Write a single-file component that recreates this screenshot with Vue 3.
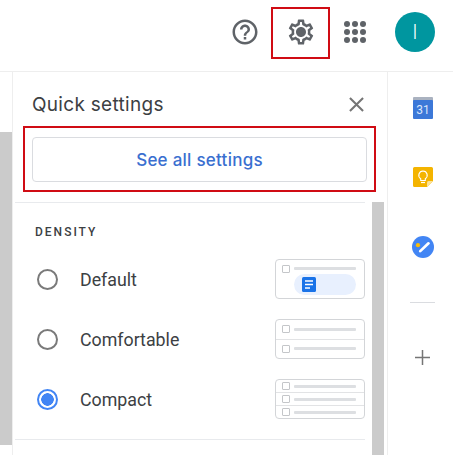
<template>
  <div class="page">
    <header class="topbar">
      <button class="icon-btn help">
        <svg viewBox="0 0 24 24" width="30" height="30"><path fill="#5f6368" d="M11 18h2v-2h-2v2zm1-16C6.48 2 2 6.48 2 12s4.48 10 10 10 10-4.48 10-10S17.52 2 12 2zm0 18c-4.41 0-8-3.59-8-8s3.59-8 8-8 8 3.59 8 8-3.59 8-8 8zm0-14c-2.21 0-4 1.79-4 4h2c0-1.1.9-2 2-2s2 .9 2 2c0 2-3 1.75-3 5h2c0-2.25 3-2.5 3-5 0-2.21-1.79-4-4-4z" /></svg>
      </button>
      <button class="icon-btn gear">
        <svg viewBox="0 0 24 24" width="30" height="30"><path fill="#5f6368" d="M19.43 12.98c.04-.32.07-.64.07-.98 0-.34-.03-.66-.07-.98l2.11-1.65c.19-.15.24-.42.12-.64l-2-3.46c-.09-.16-.26-.25-.44-.25-.06 0-.12.01-.17.03l-2.49 1c-.52-.4-1.08-.73-1.69-.98l-.38-2.65C14.46 2.18 14.25 2 14 2h-4c-.25 0-.46.18-.49.42l-.38 2.65c-.61.25-1.17.59-1.69.98l-2.49-1c-.06-.02-.12-.03-.18-.03-.17 0-.34.09-.43.25l-2 3.46c-.13.22-.07.49.12.64l2.11 1.65c-.04.32-.07.65-.07.98 0 .33.03.66.07.98l-2.11 1.65c-.19.15-.24.42-.12.64l2 3.46c.09.16.26.25.44.25.06 0 .12-.01.17-.03l2.49-1c.52.4 1.08.73 1.69.98l.38 2.65c.03.24.24.42.49.42h4c.25 0 .46-.18.49-.42l.38-2.65c.61-.25 1.17-.59 1.69-.98l2.49 1c.06.02.12.03.18.03.17 0 .34-.09.43-.25l2-3.46c.12-.22.07-.49-.12-.64l-2.11-1.65zm-1.98-1.71c.04.31.05.52.05.73 0 .21-.02.43-.05.73l-.14 1.13.89.7 1.08.84-.7 1.21-1.27-.51-1.04-.42-.9.68c-.43.32-.84.56-1.25.73l-1.06.43-.16 1.13-.2 1.35h-1.4l-.19-1.35-.16-1.13-1.06-.43c-.43-.18-.83-.41-1.23-.71l-.91-.7-1.06.43-1.27.51-.7-1.21 1.08-.84.89-.7-.14-1.13c-.03-.31-.05-.54-.05-.74s.02-.43.05-.73l.14-1.13-.89-.7-1.08-.84.7-1.21 1.27.51 1.04.42.9-.68c.43-.32.84-.56 1.25-.73l1.06-.43.16-1.13.2-1.35h1.39l.19 1.35.16 1.13 1.06.43c.43.18.83.41 1.23.71l.91.7 1.06-.43 1.27-.51.7 1.21-1.07.85-.89.7.14 1.13zM12 8c-2.21 0-4 1.79-4 4s1.79 4 4 4 4-1.79 4-4-1.79-4-4-4z" /></svg>
      </button>
      <div class="apps">
        <span v-for="n in 9" :key="n" class="dot"></span>
      </div>
      <div class="avatar">I</div>
    </header>

    <div class="content">
      <div class="left-strip">
        <div class="left-grey"></div>
      </div>

      <section class="panel">
        <div class="panel-head">
          <h2>Quick settings</h2>
          <svg class="close" viewBox="0 0 16 16" width="15" height="15"><path d="M1 1l14 14M15 1L1 15" stroke="#757575" stroke-width="2.2" fill="none" /></svg>
        </div>
        <div class="see-all-wrap">
          <button class="see-all">See all settings</button>
        </div>
        <div class="panel-body">
          <div class="panel-scroll">
            <div class="density">
              <h3>DENSITY</h3>
              <div v-for="opt in densities" :key="opt.name" class="option">
                <span class="radio" :class="{ checked: opt.checked }"></span>
                <span class="opt-label">{{ opt.name }}</span>
                <div class="thumb">
                  <template v-if="opt.rows === 1">
                    <div class="thumb-row first">
                      <i class="box"></i><i class="line"></i>
                    </div>
                    <div class="chip">
                      <svg viewBox="0 0 14 15" width="14" height="15"><rect width="14" height="15" rx="1.5" fill="#1a73e8" /><path d="M3 4h8M3 7.500h8M3 11h5" stroke="#fff" stroke-width="1.400" /></svg>
                    </div>
                  </template>
                  <template v-else>
                    <div v-for="r in opt.rows" :key="r" class="thumb-row split">
                      <i class="box"></i><i class="line"></i>
                    </div>
                  </template>
                </div>
              </div>
            </div>
          </div>
          <div class="scrollbar"></div>
        </div>
      </section>

      <aside class="side">
        <svg class="side-icon" viewBox="0 0 20 22" width="20" height="22">
          <path d="M1 0h18a1 1 0 0 1 1 1v4H0V1a1 1 0 0 1 1-1z" fill="#aab2c0" />
          <rect y="3" width="20" height="19" rx="1" fill="#3c78d8" />
          <text x="10" y="17" text-anchor="middle" class="cal-num">31</text>
        </svg>
        <svg class="side-icon keep" viewBox="0 0 20 20" width="20" height="20">
          <path d="M1.500 0h17A1.500 1.500 0 0 1 20 1.500V14l-6 6H1.500A1.500 1.500 0 0 1 0 18.500v-17A1.500 1.500 0 0 1 1.500 0z" fill="#f4b400" />
          <path d="M20 14l-6 6v-4.500a1.500 1.500 0 0 1 1.500-1.500z" fill="#fbe29a" />
          <path d="M10 4a4.200 4.200 0 0 0-2.300 7.700V13.500h4.600V11.700A4.200 4.200 0 0 0 10 4z" fill="none" stroke="#fff" stroke-width="1.100" />
          <path d="M8 15.500h4" stroke="#fff" stroke-width="1.200" />
        </svg>
        <svg class="side-icon tasks" viewBox="0 0 24 24" width="22" height="22">
          <circle cx="12" cy="12" r="12" fill="#4285f4" />
          <path d="M9 16.500L18 8" stroke="#fff" stroke-width="3" stroke-linecap="round" />
          <circle cx="6.500" cy="10" r="2.300" fill="#fbbc04" />
        </svg>
        <div class="side-sep"></div>
        <svg class="side-icon plus" viewBox="0 0 16 16" width="15" height="15"><path d="M8 0v16M0 8h16" stroke="#757575" stroke-width="1.600" /></svg>
      </aside>
    </div>
  </div>
</template>

<script setup>
const densities = [
  { name: 'Default', rows: 1, checked: false },
  { name: 'Comfortable', rows: 2, checked: false },
  { name: 'Compact', rows: 3, checked: true }
]
</script>

<style>
html, body { margin: 0; background: #fff; }
</style>

<style scoped>
.page { width: 453px; height: 455px; overflow: hidden; background: #fff; font-family: Roboto, "Liberation Sans", sans-serif; }
.topbar { height: 63px; padding-bottom: 8px; border-bottom: 1px solid #eee; display: flex; align-items: center; }
.icon-btn { border: none; background: none; padding: 0; display: flex; align-items: center; justify-content: center; }
.help { margin-left: 230px; width: 30px; height: 30px; }
.gear { margin-left: 11px; margin-top: 3px; width: 59px; height: 52px; box-sizing: border-box; border: 2px solid #d00c14; }
.gear svg { margin-top: -2px; }
.apps { margin-left: 14px; width: 22px; display: grid; grid-template-columns: repeat(3, 6px); gap: 2px; }
.dot { width: 6px; height: 6px; border-radius: 50%; background: #5f6368; }
.avatar { margin-left: 29px; width: 40px; height: 40px; border-radius: 50%; background: #00969f; color: #fff; font-size: 20px; font-weight: 300; line-height: 40px; text-align: center; }
.content { display: flex; height: 383px; }
.left-strip { width: 12px; flex: none; padding-top: 60px; }
.left-grey { height: 313px; background: #cbcbcb; }
.panel { width: 376px; flex: none; border-left: 1px solid #eee; border-right: 1px solid #eee; display: flex; flex-direction: column; box-sizing: border-box; }
.panel-head { height: 54px; flex: none; display: flex; align-items: center; justify-content: space-between; padding: 11px 23px 0 19px; box-sizing: border-box; }
.panel-head h2 { margin: 0; font-family: Inter, Roboto, sans-serif; font-size: 19px; font-weight: 400; letter-spacing: .3px; color: #3c4043; }
.see-all-wrap { margin-left: 10px; width: 353px; height: 66px; box-sizing: border-box; border: 2px solid #d00c14; padding: 9px 7px; flex: none; }
.see-all { display: block; width: 100%; height: 45px; box-sizing: border-box; border: 1px solid #dadce0; border-radius: 4px; background: #fff; color: #3a6fd0; font-family: Inter, Roboto, sans-serif; font-weight: 500; font-size: 17px; letter-spacing: .25px; }
.panel-body { flex: 1; display: flex; margin-top: 10px; min-height: 0; }
.panel-scroll { width: 350px; margin-left: 2px; flex: none; }
.density { border-top: 1px solid #e8eaed; border-bottom: 1px solid #e8eaed; height: 238px; box-sizing: border-box; padding-top: 22px; }
.density h3 { margin: 0 0 0 20px; font-size: 12px; line-height: 14px; font-weight: 500; letter-spacing: 2px; color: #3c4043; }
.option { display: flex; align-items: center; height: 40px; margin-top: 20px; padding-left: 22px; }
.radio { width: 21px; height: 21px; box-sizing: border-box; border: 2px solid #7a7a7a; border-radius: 50%; flex: none; }
.radio.checked { border-color: #4285f4; background: radial-gradient(circle, #4285f4 0 6px, #fff 6.5px); }
.opt-label { margin-left: 22px; font-size: 17.8px; color: #3c4043; flex: 1; }
.thumb { width: 90px; height: 40px; box-sizing: border-box; border: 1px solid #d3d5d8; border-radius: 4px; display: flex; flex-direction: column; flex: none; overflow: hidden; }
.thumb-row { flex: 1; display: flex; align-items: center; padding: 0 8px 0 6px; gap: 4px; }
.thumb-row.first { flex: none; height: 17px; }
.thumb-row.split + .thumb-row.split { border-top: 1px solid #e2e3e5; }
.box { width: 6px; height: 6px; border: 1px solid #c4c6c9; border-radius: 1px; flex: none; }
.line { flex: 1; height: 3px; background: #dddfe2; border-radius: 1px; }
.chip { margin: -3px 0 0 18px; width: 62px; height: 21px; border-radius: 11px; background: #e8f0fe; display: flex; align-items: center; padding-left: 8px; box-sizing: border-box; flex: none; }
.scrollbar { width: 12px; margin-left: 7px; background: #cbcbcb; flex: none; }
.side { flex: 1; display: flex; flex-direction: column; align-items: center; padding: 25px 0 0 4px; }
.side-icon { display: block; flex: none; }
.keep { margin-top: 48px; }
.tasks { margin-top: 49px; }
.side-sep { width: 25px; height: 1px; background: #dadce0; margin-top: 44px; flex: none; }
.plus { margin-top: 47px; }
.cal-num { font-size: 12px; fill: #dbe6fb; font-family: Roboto, sans-serif; }
</style>
